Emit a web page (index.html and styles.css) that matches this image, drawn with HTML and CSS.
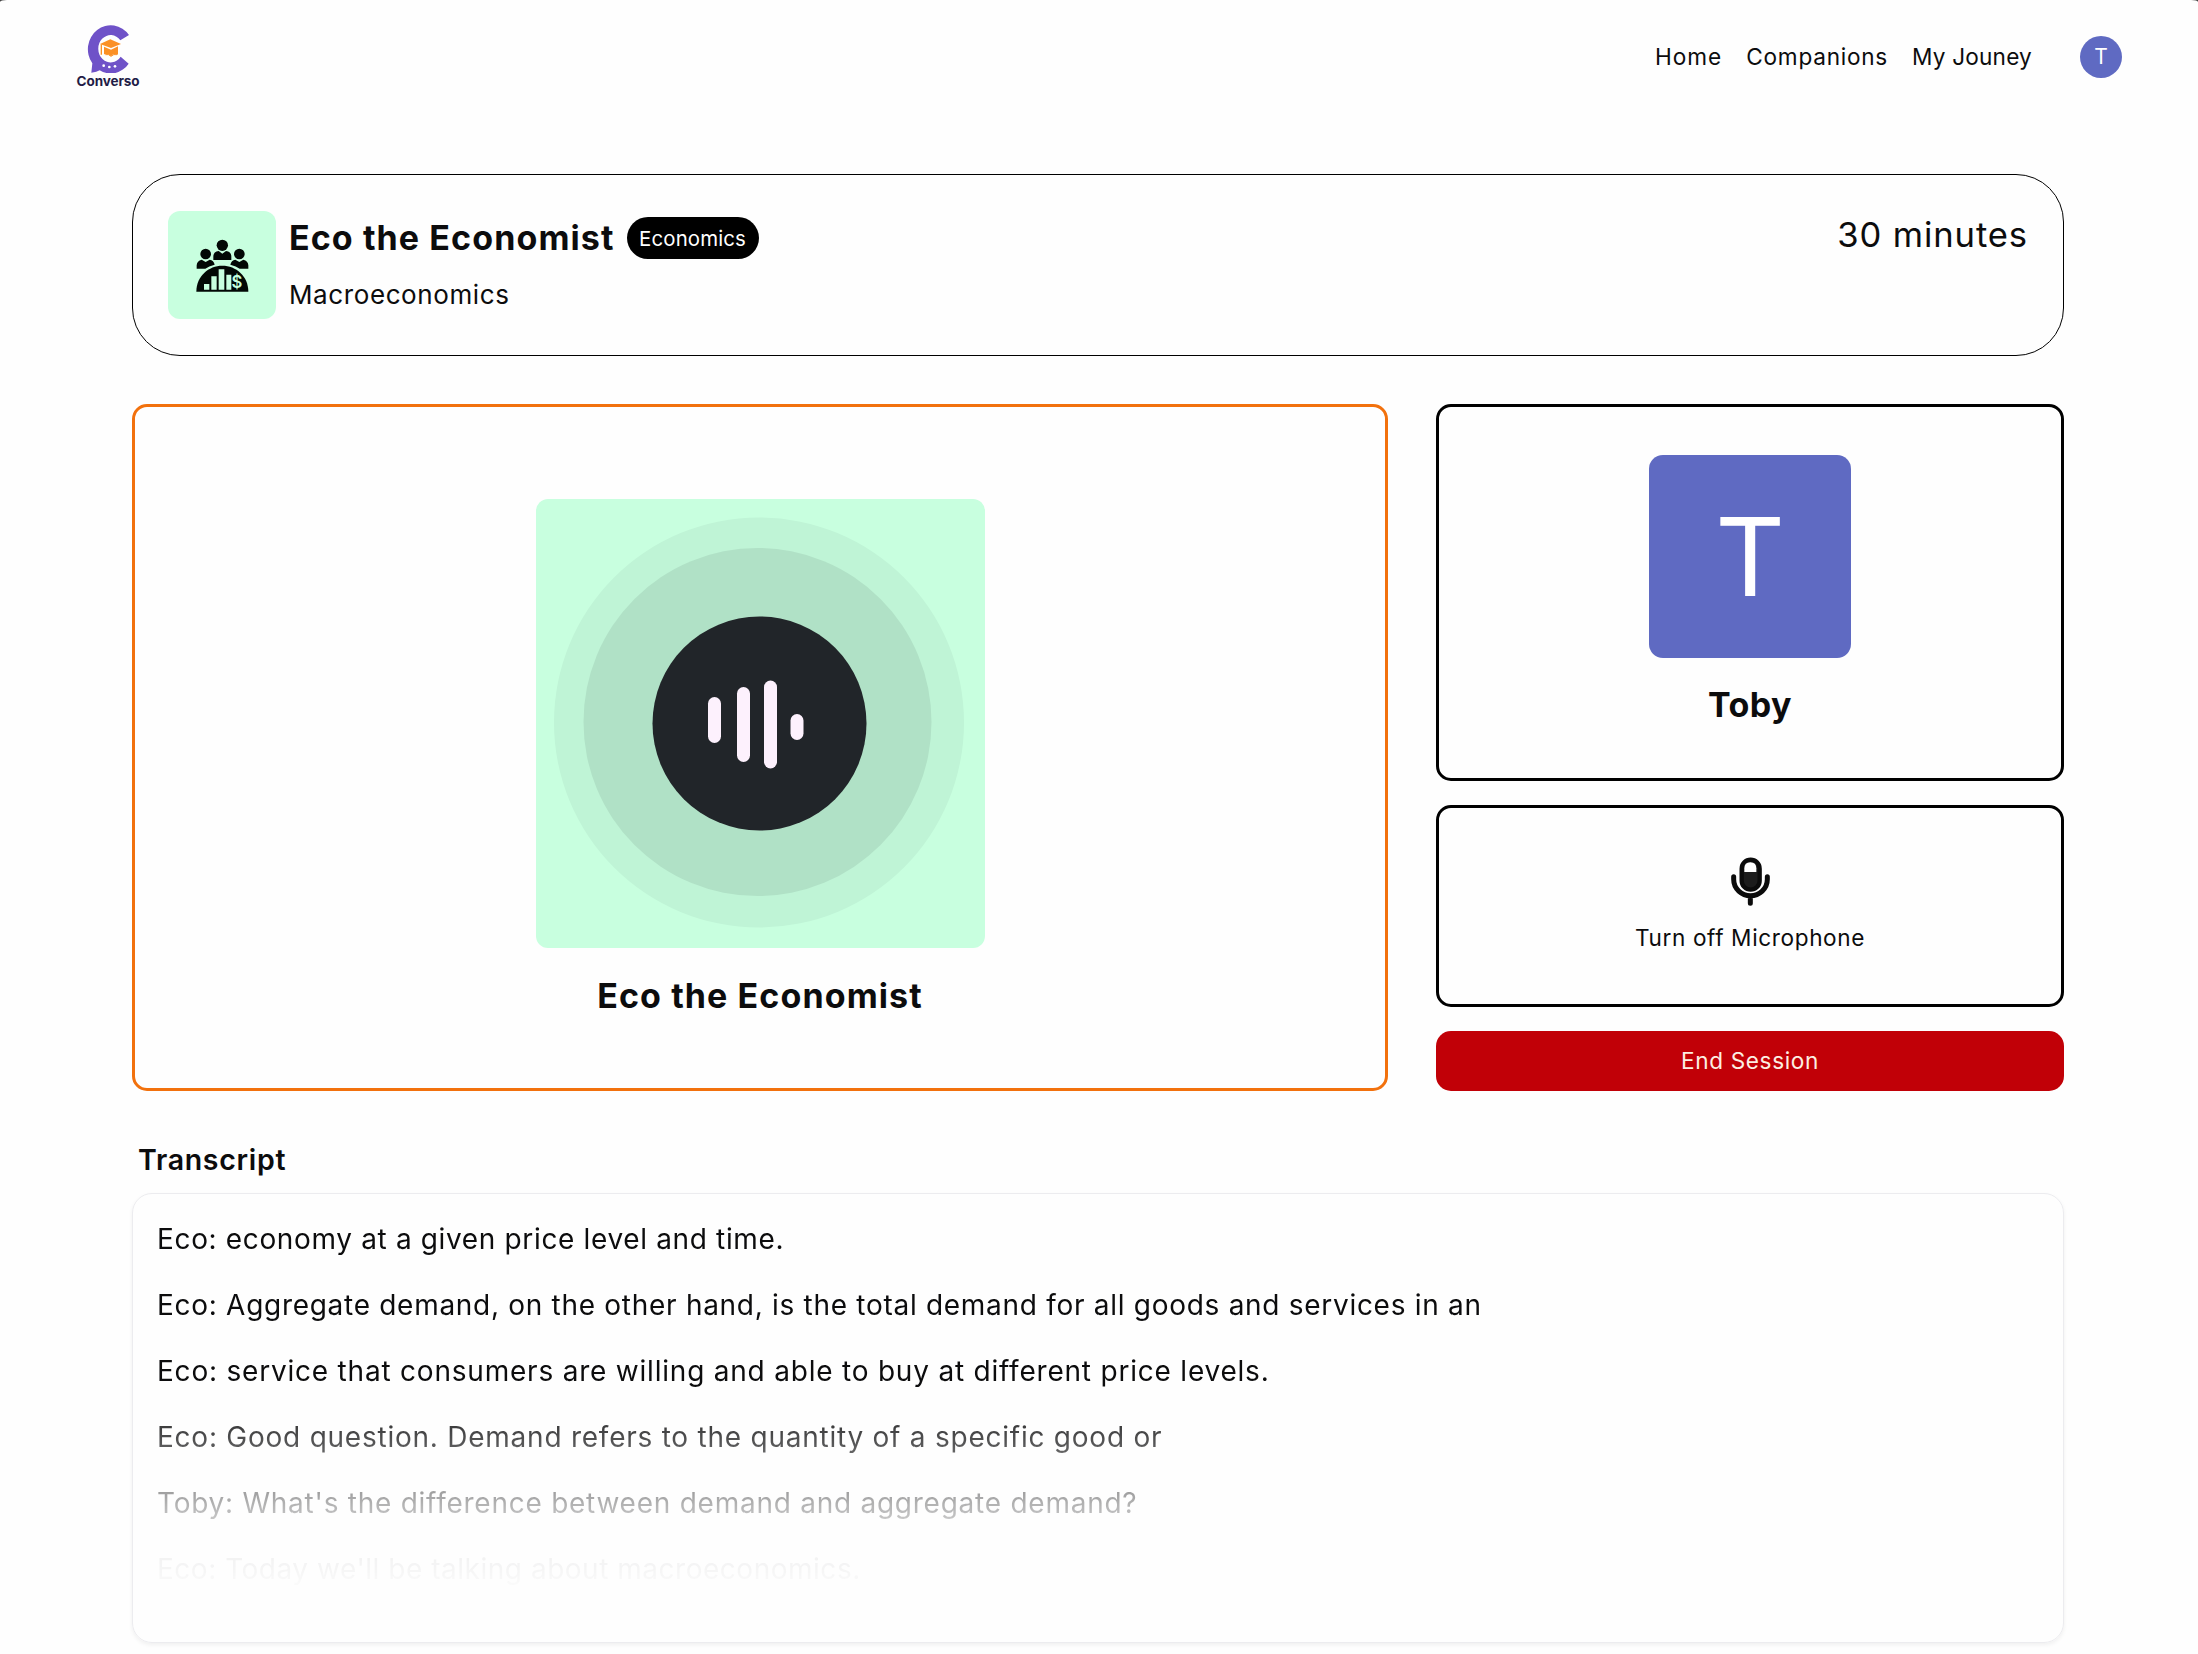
FILE: index.html
```
<!DOCTYPE html>
<html lang="en">
<head>
<meta charset="utf-8">
<title>Converso</title>
<link rel="stylesheet" href="styles.css">
</head>
<body>
<div class="page">
  <header class="navbar">
    <a class="brand">
      <svg class="brand-mark" viewBox="75 44 135 144" aria-hidden="true">
        <path d="M204 74A66 69 0 1 0 94 159L91 187Q108 185 116 180A66 69 0 0 0 203 160L179 139A37 41 0 1 1 178 90Z" fill="#6f52c8"/>
        <path d="M117 101L148 87L180 101L150 113Z" fill="#fb9026"/>
        <path d="M129 109L150 118L171 108V133Q158 127 150 138Q141 128 129 132Z" fill="#fb9026"/>
        <path d="M121 102V133" stroke="#fb9026" stroke-width="4"/>
        <path d="M133 133Q143 130 150 138Q158 130 168 133" fill="none" stroke="#fb9026" stroke-width="3"/>
        <g fill="#fff"><circle cx="128" cy="166" r="4"/><circle cx="145" cy="170" r="4"/><circle cx="162" cy="168" r="4"/></g>
      </svg>
      <span class="brand-name">Converso</span>
    </a>
    <nav class="links">
      <a class="link-home">Home</a>
      <a class="link-companions">Companions</a>
      <a class="link-journey">My Jouney</a>
      <span class="avatar-small">T</span>
    </nav>
  </header>

  <main class="session">
    <section class="summary">
      <div class="subject-tile">
        <svg viewBox="50 55 159 159" aria-hidden="true">
          <g fill="#020805">
            <circle cx="129" cy="74" r="17"/>
            <path d="M102 118V108Q102 93 118 91L129 99L140 91Q156 93 156 108V118Z"/>
            <circle cx="79" cy="100" r="16"/>
            <path d="M52 144V134Q53 120 67 117L79 124L91 117Q103 119 106 132Q88 136 78 144Z"/>
            <circle cx="180" cy="100" r="16"/>
            <path d="M207 144V134Q206 120 192 117L180 124L168 117Q156 119 153 132Q171 136 181 144Z"/>
            <path d="M51 213C51 166 88 135 129 135S207 166 207 213Z"/>
          </g>
          <path d="M74 190H90V207H74ZM96 167H112V207H96ZM118 146H135V207H118ZM141 162H156V207H141Z" fill="#c8ffdf"/>
          <text x="173" y="203" class="dollar">$</text>
        </svg>
      </div>
      <div class="summary-text">
        <div class="title-row">
          <h1 class="title">Eco the Economist</h1>
          <span class="badge">Economics</span>
        </div>
        <p class="topic">Macroeconomics</p>
      </div>
      <p class="duration">30 minutes</p>
    </section>

    <section class="stage">
      <div class="companion">
        <svg class="voice" viewBox="0 0 449 449" aria-hidden="true">
          <rect width="449" height="449" fill="#c8ffdf"/>
          <circle cx="223" cy="223.500" r="205" fill="#bff4d6"/>
          <circle cx="221.500" cy="223" r="174" fill="#b0e1c6"/>
          <circle cx="223.500" cy="224.500" r="107" fill="#212529"/>
          <g fill="#fdf1fd">
            <rect x="172" y="198" width="13" height="46" rx="6.500"/>
            <rect x="201" y="188" width="13" height="75" rx="6.500"/>
            <rect x="228" y="181.500" width="13" height="88" rx="6.500"/>
            <rect x="254.500" y="215" width="13" height="26" rx="6.500"/>
          </g>
        </svg>
        <p class="name">Eco the Economist</p>
      </div>
      <div class="side">
        <div class="user">
          <div class="avatar-large">T</div>
          <p class="name name-user">Toby</p>
        </div>
        <button class="mic">
          <svg class="mic-icon" viewBox="92 52 117 147" aria-hidden="true">
            <rect x="124" y="60" width="54" height="90" rx="27" fill="#1c1c1c" stroke="#0b0b0b" stroke-width="13"/>
            <path d="M132 97V86Q132 68 150 68T168 86V97Z" fill="#fff"/>
            <path d="M100 111V119C100 148 124 168 150.500 168S201 148 201 119V111M150 168V191" fill="none" stroke="#0b0b0b" stroke-width="15" stroke-linecap="round"/>
          </svg>
          <span>Turn off Microphone</span>
        </button>
        <button class="end">End Session</button>
      </div>
    </section>

    <section class="transcript">
      <h2 class="transcript-title">Transcript</h2>
      <div class="transcript-box">
        <div class="messages">
          <p class="m1">Eco: economy at a given price level and time.</p>
          <p class="m2">Eco: Aggregate demand, on the other hand, is the total demand for all goods and services in an</p>
          <p class="m3">Eco: service that consumers are willing and able to buy at different price levels.</p>
          <p class="m4">Eco: Good question. Demand refers to the quantity of a specific good or</p>
          <p class="m5">Toby: What's the difference between demand and aggregate demand?</p>
          <p class="m6">Eco: Today we'll be talking about macroeconomics.</p>
        </div>
      </div>
    </section>
  </main>
</div>
</body>
</html>
```
FILE: styles.css
```
* { box-sizing: border-box; margin: 0; padding: 0; }
html { background: #444; }
body {
  font-family: Inter, "Liberation Sans", sans-serif;
  color: #0c0c0d;
}
.page {
  height: 1654px;
  overflow: hidden;
  background: #fefefe;
  border-radius: 7px 7px 0 0 / 2px 2px 0 0;
}

.navbar {
  display: flex;
  justify-content: space-between;
  align-items: flex-start;
  height: 114px;
  padding: 0 76px 0 76px;
}
.brand { display: flex; flex-direction: column; align-items: center; padding-top: 25px; width: 64px; }
.brand-mark { width: 45px; height: 48px; }
.brand-name { font-size: 13.5px; font-weight: 700; line-height: 16px; color: #221c46; letter-spacing: -0.1px; }
.links { display: flex; align-items: center; height: 113px; gap: 24px; font-size: 22.6px; white-space: nowrap; }
.link-home { letter-spacing: 1px; }
.link-companions { letter-spacing: 0.75px; }
.link-journey { letter-spacing: 0.2px; }
.avatar-small {
  display: flex; align-items: center; justify-content: center;
  width: 42px; height: 42px; margin-left: 24px;
  border-radius: 50%; background: #5f6ac2; color: #fff; font-size: 21px; font-weight: 400;
}

.session { width: 1932px; margin: 60px 0 0 132px; }
.summary {
  display: flex;
  height: 182px;
  padding: 36px 35px;
  border: 1.5px solid #000;
  border-radius: 48px;
}
.subject-tile {
  display: flex; align-items: center; justify-content: center;
  width: 108px; height: 108px; border-radius: 12px; background: #c8ffdf;
}
.subject-tile svg { width: 53px; height: 53px; }
.dollar { font: 600 50px Inter, sans-serif; fill: #c8ffdf; text-anchor: middle; }
.summary-text { flex: 1; padding: 6px 0 0 13px; }
.title-row { display: flex; align-items: center; gap: 12px; height: 42px; }
.title { font-size: 34px; font-weight: 700; line-height: 42px; letter-spacing: 1.1px; }
.badge {
  display: flex; align-items: center; justify-content: center;
  width: 132px; height: 42px; border-radius: 21px;
  background: #000; color: #fff; font-size: 20.4px; letter-spacing: 0.15px;
}
.topic { margin-top: 18px; font-size: 26px; line-height: 36px; letter-spacing: 0.6px; }
.duration { font-size: 34.6px; line-height: 46px; letter-spacing: 0.9px; }

.stage { display: flex; gap: 48px; height: 687px; margin-top: 48px; }
.companion {
  display: flex; flex-direction: column; align-items: center;
  width: 1256px; padding-top: 92px;
  border: 3px solid #f2710d; border-radius: 15px;
}
.voice { width: 449px; height: 449px; border-radius: 12px; }
.name { margin-top: 24px; font-size: 34px; font-weight: 700; line-height: 48px; letter-spacing: 1.1px; }
.side { display: flex; flex-direction: column; gap: 24px; width: 628px; }
.user {
  display: flex; flex-direction: column; align-items: center;
  height: 377px; padding-top: 48px;
  border: 3px solid #000; border-radius: 15px;
}
.avatar-large {
  display: flex; align-items: center; justify-content: center;
  width: 202px; height: 203px; border-radius: 14px;
  background: #5f6ac2; color: #fff; font-size: 108px;
}
.name-user { margin-top: 23px; letter-spacing: 0.5px; }
.mic, .end { font-family: inherit; font-size: 22.6px; letter-spacing: 0.62px; color: inherit; background: none; }
.mic {
  display: flex; flex-direction: column; align-items: center; justify-content: flex-start; gap: 16px;
  height: 202px; padding-top: 49px; line-height: 32px;
  border: 3px solid #000; border-radius: 15px;
}
.mic-icon { width: 39px; height: 49px; flex: none; }
.end { height: 60px; padding-bottom: 2px; border: 0; border-radius: 15px; background: #c10007; color: #fdeee2; }

.transcript-title { margin: 51px 0 0 6px; font-size: 28.5px; font-weight: 600; line-height: 36px; letter-spacing: 0.7px; }
.transcript-box {
  height: 450px; margin-top: 15px; padding: 12px 24px;
  border: 1.5px solid #ececef; border-radius: 20px;
  box-shadow: 0 2px 4px rgba(0, 0, 0, 0.06);
}
.messages {
  font-size: 28px; line-height: 66px; white-space: nowrap;
  -webkit-mask-image: linear-gradient(#000 185px, rgba(0, 0, 0, 0.74) 230px, rgba(0, 0, 0, 0.3) 300px, rgba(0, 0, 0, 0.06) 345px, rgba(0, 0, 0, 0.01) 380px);
  mask-image: linear-gradient(#000 185px, rgba(0, 0, 0, 0.74) 230px, rgba(0, 0, 0, 0.3) 300px, rgba(0, 0, 0, 0.06) 345px, rgba(0, 0, 0, 0.01) 380px);
}
.m1 { letter-spacing: 0.65px; }
.m2 { letter-spacing: 0.71px; }
.m3 { letter-spacing: 0.79px; }
.m4 { letter-spacing: 0.76px; }
.m5 { letter-spacing: 0.75px; }
.m6 { letter-spacing: 0.52px; }
```
